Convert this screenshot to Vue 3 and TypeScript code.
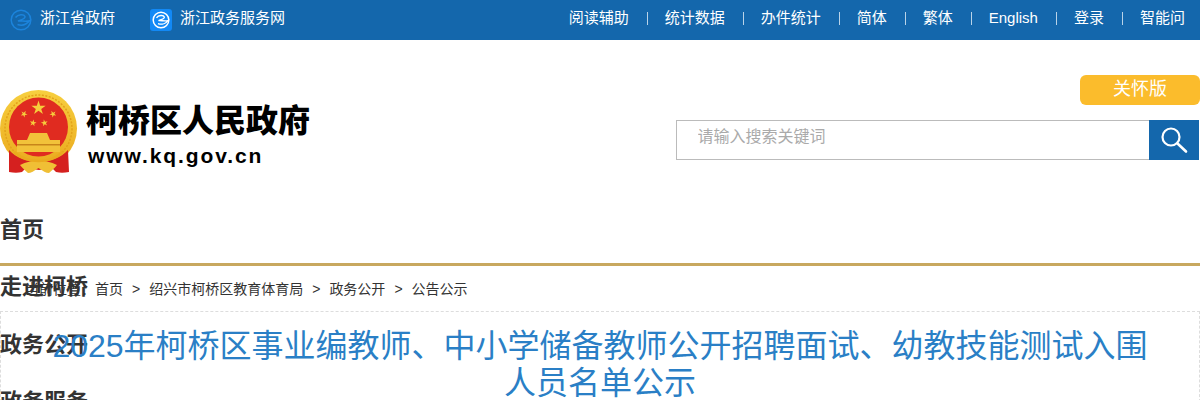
<script setup lang="ts">
const topRight = ['阅读辅助', '统计数据', '办件统计', '简体', '繁体', 'English', '登录', '智能问'];
const navItems = ['首页', '走进柯桥', '政务公开', '政务服务'];
const crumbs = ['首页', '绍兴市柯桥区教育体育局', '政务公开', '公告公示'];

// five-point star as a polygon string
function star(cx: number, cy: number, r: number, rot = 0): string {
  const pts: string[] = [];
  for (let i = 0; i < 10; i++) {
    const rad = i % 2 === 0 ? r : r * 0.38;
    const a = -Math.PI / 2 + rot + (i * Math.PI) / 5;
    pts.push(`${(cx + rad * Math.cos(a)).toFixed(2)},${(cy + rad * Math.sin(a)).toFixed(2)}`);
  }
  return pts.join(' ');
}

const stars = [
  star(38.5, 18, 7.5),
  star(24, 24, 3.6, 0.5),
  star(53, 24, 3.6, -0.5),
  star(33, 33, 3.6, 0.2),
  star(44.5, 33, 3.6, -0.2),
];
</script>

<template>
  <div class="page">
    <div class="topbar">
      <div class="topbar__left">
        <a class="site">
          <svg class="site__icon" width="22" height="22" viewBox="0 0 22 22">
            <circle cx="11" cy="11" r="9.8" fill="none" stroke="#1c84dc" stroke-width="1.5" />
            <path d="M5.500 8.500C8 5 14 4.800 15 7.500C15.600 10 10.500 10.800 8 12C11.500 11.500 15 13 19.500 11.800C17 15 12.500 17.200 7.500 15.500"
              fill="none" stroke="#1c84dc" stroke-width="1.500" />
          </svg>
          <span class="site__text">浙江省政府</span>
        </a>
        <a class="site">
          <svg class="site__icon" width="22" height="22" viewBox="0 0 22 22">
            <rect width="22" height="22" rx="3" fill="#1289f6" />
            <circle cx="11" cy="11" r="7.800" fill="none" stroke="#fff" stroke-width="1.500" />
            <path d="M6.500 8.800C8.500 6 13.500 5.800 14.300 8C14.800 10 10.500 10.700 8.500 11.600C11.500 11.300 14.500 12.500 18 11.600C16 14.300 12 16 8 14.600"
              fill="none" stroke="#fff" stroke-width="1.400" />
          </svg>
          <span class="site__text">浙江政务服务网</span>
        </a>
      </div>
      <ul class="topbar__right">
        <li v-for="item in topRight" :key="item">{{ item }}</li>
      </ul>
    </div>

    <div class="header">
      <div class="logo">
        <svg class="logo__emblem" width="78" height="85" viewBox="0 0 78 85">
          <defs>
            <linearGradient id="ring" x1="0" y1="0" x2="0" y2="1">
              <stop offset="0" stop-color="#f7cf3f" />
              <stop offset="1" stop-color="#eaaa1e" />
            </linearGradient>
          </defs>
          <circle cx="38.500" cy="38.500" r="38.500" fill="url(#ring)" />
          <circle cx="38.500" cy="38.500" r="33.500" fill="none" stroke="#e3a21a" stroke-width="1.500" stroke-dasharray="2 1.500" />
          <circle cx="38.500" cy="37" r="29.500" fill="#e02b20" />
          <polygon v-for="(p, i) in stars" :key="i" :points="p" fill="#f6cd3c" />
          <path d="M30 43h17l3 7h10v12H17V50h10z" fill="#f2c23a" />
          <rect x="17" y="54" width="43" height="1.500" fill="#c8851a" />
          <path d="M9 60C16 68 27 72 38.500 72S61 68 68 60l1 22c-5 1-9 1-13 0l-4-4-13 2-13-2-4 4c-4 1-8 1-13 0z" fill="#d5201f" />
          <path d="M20 75c6-3 12-4.500 18.500-4.500S51 72 57 75c-2 3-5 5-8 8-3 0-6-2-10.500-5-4.500 3-7.500 5-10.500 5-3-3-6-5-8-8z" fill="#f0bf35" />
          <path d="M14 62c7 6 15 9 24.500 9S56 68 63 62" fill="none" stroke="#eaaa1e" stroke-width="2.500" />
        </svg>
        <div class="logo__text">
          <div class="logo__name">柯桥区人民政府</div>
          <div class="logo__url">www.kq.gov.cn</div>
        </div>
      </div>
      <div class="tools">
        <a class="care">关怀版</a>
        <div class="search">
          <input class="search__input" placeholder="请输入搜索关键词" />
          <button class="search__btn" aria-label="搜索">
            <svg width="30" height="30" viewBox="0 0 30 30">
              <circle cx="12" cy="12" r="8.500" fill="none" stroke="#fff" stroke-width="2.200" />
              <path d="M18.500 18.500 L27 26.500" stroke="#fff" stroke-width="2.600" stroke-linecap="round" />
            </svg>
          </button>
        </div>
      </div>
    </div>

    <div class="nav">
      <a v-for="item in navItems" :key="item" class="nav__item">{{ item }}</a>
    </div>

    <div class="crumbs">
      <span class="crumbs__label">当前位置：</span>
      <template v-for="(c, i) in crumbs" :key="c">
        <span v-if="i > 0" class="crumbs__sep">&gt;</span>
        <a>{{ c }}</a>
      </template>
    </div>

    <div class="article">
      <h1 class="article__title">2025年柯桥区事业编教师、中小学储备教师公开招聘面试、幼教技能测试入围人员名单公示</h1>
    </div>
  </div>
</template>

<style scoped>
.page {
  width: 1200px;
  font-family: "Liberation Sans", "Noto Sans CJK SC", sans-serif;
  color: #333;
}
.topbar {
  height: 40px;
  background: #1467ac;
  color: #fff;
  display: flex;
  justify-content: space-between;
  align-items: center;
  font-size: 15px;
}
.topbar__left {
  display: flex;
  padding-left: 10px;
}
.site {
  display: flex;
  align-items: center;
  gap: 8px;
  width: 140px;
}
.site__text {
  line-height: 20px;
  padding-bottom: 4px;
}
.topbar__right {
  display: flex;
  list-style: none;
  margin: 0;
  padding: 0 15px 4px 0;
  line-height: 20px;
}
.topbar__right li {
  position: relative;
  margin-left: 36px;
}
.topbar__right li + li::before {
  content: "";
  position: absolute;
  left: -18px;
  top: 4px;
  height: 13px;
  width: 1px;
  background: #b9d3e8;
}
.header {
  height: 160px;
  display: flex;
  justify-content: space-between;
}
.logo {
  display: flex;
  padding-top: 50px;
  height: 85px;
}
.logo__emblem {
  flex: none;
}
.logo__text {
  margin-left: 8px;
  padding-top: 11px;
}
.logo__name {
  font-size: 32px;
  line-height: 40px;
  font-weight: 900;
  color: #000;
}
.logo__url {
  font-size: 21px;
  line-height: 24px;
  font-weight: 700;
  color: #000;
  letter-spacing: 1.9px;
  margin: 3px 0 0 2px;
}
.tools {
  display: flex;
  flex-direction: column;
  align-items: flex-end;
  padding-top: 35px;
}
.care {
  width: 120px;
  height: 30px;
  line-height: 28px;
  background: #fbbc2c;
  border-radius: 6px;
  color: #fff;
  font-size: 18px;
  text-align: center;
}
.search {
  display: flex;
  margin-top: 15px;
  width: 524px;
  height: 40px;
}
.search__input {
  box-sizing: border-box;
  width: 473px;
  height: 40px;
  border: 1px solid #bbb;
  border-right: none;
  padding: 0 0 6px 20.500px;
  font: 16px "Liberation Sans", "Noto Sans CJK SC", sans-serif;
  outline: none;
}
.search__input::placeholder {
  color: #aaa;
}
.search__btn {
  width: 50px;
  height: 40px;
  border: none;
  padding: 0;
  background: #1467ac;
  display: flex;
  align-items: center;
  justify-content: center;
}
.nav {
  height: 62.500px;
  padding-top: 0.500px;
  border-bottom: 3px solid #c8a85f;
}
.nav__item {
  display: block;
  line-height: 57.600px;
  font-size: 22px;
  font-weight: 700;
  color: #333;
}
.crumbs {
  height: 45px;
  line-height: 46px;
  font-size: 14px;
  color: #333;
  padding-left: 25px;
  white-space: nowrap;
}
.crumbs__sep {
  margin: 0 9px;
}
.article {
  border: 1px dashed #ddd;
  border-bottom: none;
  padding: 16px 50px 0;
}
.article__title {
  margin: 0;
  font-size: 32px;
  line-height: 37px;
  font-weight: 400;
  color: #2a7fc6;
  text-align: center;
}
</style>

<style>
html, body {
  overflow: hidden;
  background: #fff;
}
</style>
